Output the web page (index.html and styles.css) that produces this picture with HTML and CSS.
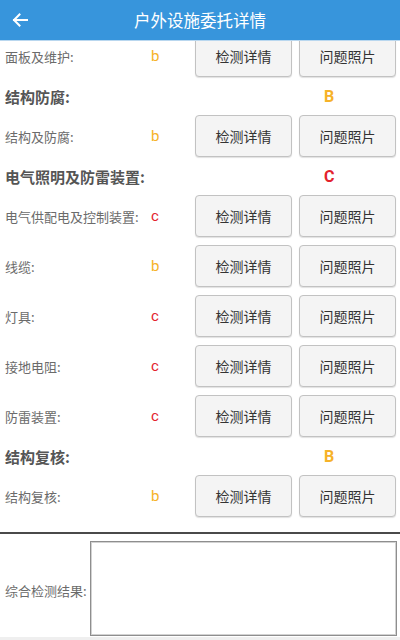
FILE: index.html
```html
<!DOCTYPE html>
<html lang="zh-CN">
<head>
<meta charset="utf-8">
<title>户外设施委托详情</title>
<link rel="stylesheet" href="styles.css">
</head>
<body>
<div class="page">
  <header class="topbar">
    <span class="back">
      <svg width="16" height="14" viewBox="0 0 16 14"><path d="M15 7H2M7.5 1.5L2 7l5.5 5.5" fill="none" stroke="#fff" stroke-width="2" stroke-linecap="square"/></svg>
    </span>
    <h1 class="title">户外设施委托详情</h1>
  </header>
  <main class="scroll">
    <div class="list">
      <div class="row"><span class="label">面板及维护:</span><span class="grade b">b</span><button class="btn">检测详情</button><button class="btn">问题照片</button></div>
      <div class="section"><span class="slabel">结构防腐:</span><span class="sgrade b">B</span></div>
      <div class="row"><span class="label">结构及防腐:</span><span class="grade b">b</span><button class="btn">检测详情</button><button class="btn">问题照片</button></div>
      <div class="section"><span class="slabel">电气照明及防雷装置:</span><span class="sgrade c">C</span></div>
      <div class="row"><span class="label">电气供配电及控制装置:</span><span class="grade c">c</span><button class="btn">检测详情</button><button class="btn">问题照片</button></div>
      <div class="row"><span class="label">线缆:</span><span class="grade b">b</span><button class="btn">检测详情</button><button class="btn">问题照片</button></div>
      <div class="row"><span class="label">灯具:</span><span class="grade c">c</span><button class="btn">检测详情</button><button class="btn">问题照片</button></div>
      <div class="row"><span class="label">接地电阻:</span><span class="grade c">c</span><button class="btn">检测详情</button><button class="btn">问题照片</button></div>
      <div class="row"><span class="label">防雷装置:</span><span class="grade c">c</span><button class="btn">检测详情</button><button class="btn">问题照片</button></div>
      <div class="section"><span class="slabel">结构复核:</span><span class="sgrade b">B</span></div>
      <div class="row"><span class="label">结构复核:</span><span class="grade b">b</span><button class="btn">检测详情</button><button class="btn">问题照片</button></div>
    </div>
  </main>
  <div class="divider"></div>
  <section class="result">
    <span class="rlabel">综合检测结果:</span>
    <textarea class="rbox"></textarea>
  </section>
  <div class="bottomstrip"></div>
</div>
</body>
</html>
```
FILE: styles.css
```css
* { box-sizing: border-box; }
html, body { margin: 0; padding: 0; }
body {
  width: 400px;
  height: 640px;
  overflow: hidden;
  background: #fff;
  font-family: "Noto Sans CJK SC", "Noto Sans", Roboto, sans-serif;
}
.page {
  display: flex;
  flex-direction: column;
  height: 640px;
}
.topbar {
  position: relative;
  z-index: 2;
  flex: 0 0 41px;
  height: 41px;
  background: #3795dc;
  border-bottom: 1px solid #b9d7ef;
  display: flex;
  align-items: center;
  justify-content: center;
}
.back {
  position: absolute;
  left: 12px;
  top: 13px;
  display: flex;
}
.title {
  margin: 0;
  color: #fff;
  font-size: 16.5px;
  font-weight: normal;
  line-height: 40px;
}
.scroll {
  flex: 1 1 auto;
  overflow: hidden;
}
.list {
  margin-top: -10px;
}
.row {
  display: flex;
  align-items: center;
  height: 50px;
  padding: 0 4px 0 5px;
}
.label {
  width: 146px;
  font-size: 13px;
  color: #6b6b6b;
  white-space: nowrap;
}
.grade {
  flex: 1;
  font-family: Roboto, "Noto Sans", sans-serif;
  font-size: 15px;
}
.b { color: #f6b228; }
.c { color: #e3222c; }
.btn {
  width: 97px;
  height: 42px;
  margin: 0;
  padding: 0;
  background: #f4f4f4;
  border: 1px solid #c2c2c2;
  border-radius: 4px;
  box-shadow: 0 1px 1px rgba(0,0,0,0.12);
  font-family: "Noto Sans CJK SC", "Noto Sans", sans-serif;
  font-size: 14px;
  color: #333;
}
.btn + .btn { margin-left: 7px; }
.section {
  display: flex;
  align-items: center;
  height: 30px;
  padding-left: 5px;
}
.slabel {
  width: 319px;
  font-size: 15px;
  font-weight: bold;
  color: #555;
}
.sgrade {
  font-family: Roboto, "Noto Sans", sans-serif;
  font-weight: bold;
  font-size: 16px;
}
.divider {
  flex: 0 0 2px;
  height: 2px;
  background: #4a4a4a;
}
.result {
  flex: 0 0 103px;
  display: flex;
  align-items: center;
  padding: 7px 3px 1px 5px;
}
.rlabel {
  width: 85px;
  font-size: 13px;
  color: #6b6b6b;
  white-space: nowrap;
  margin-top: 4px;
}
.rbox {
  flex: 1;
  height: 95px;
  margin: 0;
  border: 1px solid #8e8e8e;
  box-shadow: inset 0 0 0 1px #d2d2d2;
  resize: none;
  background: #fff;
  outline: none;
}
.bottomstrip {
  flex: 0 0 3px;
  background: #efefef;
}
```
